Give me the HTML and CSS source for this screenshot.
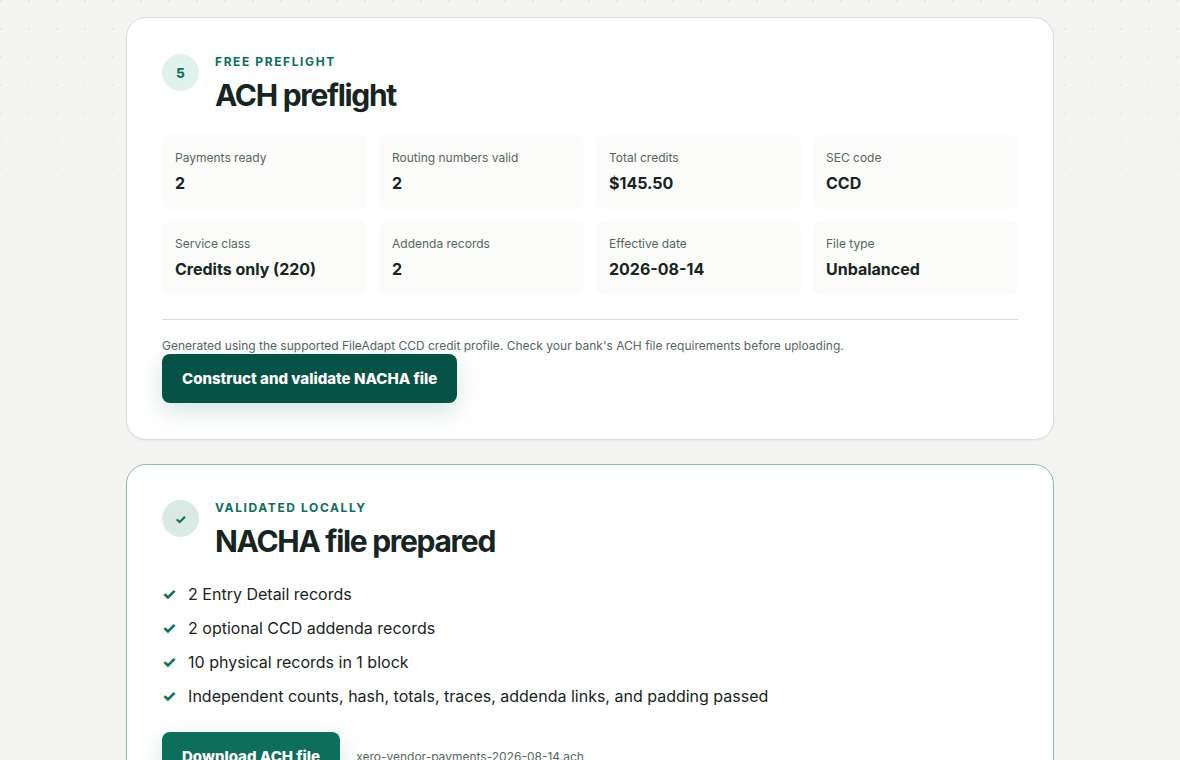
FILE: index.html
```html
<!DOCTYPE html>
<html lang="en">
<head>
<meta charset="utf-8">
<meta name="viewport" content="width=device-width, initial-scale=1">
<title>ACH preflight</title>
<link rel="stylesheet" href="styles.css">
</head>
<body>
<main class="page">
  <section class="card">
    <header class="card-head">
      <span class="step">5</span>
      <div class="heading">
        <p class="eyebrow">FREE PREFLIGHT</p>
        <h2 class="title">ACH preflight</h2>
      </div>
    </header>
    <dl class="facts">
      <div class="fact"><dt>Payments ready</dt><dd>2</dd></div>
      <div class="fact"><dt>Routing numbers valid</dt><dd>2</dd></div>
      <div class="fact"><dt>Total credits</dt><dd>$145.50</dd></div>
      <div class="fact"><dt>SEC code</dt><dd>CCD</dd></div>
      <div class="fact"><dt>Service class</dt><dd>Credits only (220)</dd></div>
      <div class="fact"><dt>Addenda records</dt><dd>2</dd></div>
      <div class="fact"><dt>Effective date</dt><dd>2026-08-14</dd></div>
      <div class="fact"><dt>File type</dt><dd>Unbalanced</dd></div>
    </dl>
    <div class="construct">
      <p class="note">Generated using the supported FileAdapt CCD credit profile. Check your bank's ACH file requirements before uploading.</p>
      <button class="button button-dark" type="button">Construct and validate NACHA file</button>
    </div>
  </section>

  <section class="card card-valid">
    <header class="card-head">
      <span class="step step-valid">✓</span>
      <div class="heading">
        <p class="eyebrow">VALIDATED LOCALLY</p>
        <h2 class="title">NACHA file prepared</h2>
      </div>
    </header>
    <ul class="checks">
      <li>2 Entry Detail records</li>
      <li>2 optional CCD addenda records</li>
      <li>10 physical records in 1 block</li>
      <li>Independent counts, hash, totals, traces, addenda links, and padding passed</li>
    </ul>
    <div class="download">
      <button class="button" type="button">Download ACH file</button>
      <span class="filename">xero-vendor-payments-2026-08-14.ach</span>
    </div>
  </section>
</main>
</body>
</html>
```

FILE: styles.css
```css
* {
  box-sizing: border-box;
}

body {
  margin: 0;
  background: #f4f4f2;
  color: #172522;
  font-family: Inter, "Liberation Sans", sans-serif;
  font-size: 16px;
  line-height: 24px;
}

body::before {
  content: "";
  position: absolute;
  inset: 0 0 auto;
  height: 320px;
  z-index: -1;
  background-image: radial-gradient(circle at 1px 1px, rgba(23, 37, 34, 0.06) 1px, transparent 0);
  background-size: 28px 28px;
  mask-image: linear-gradient(#000, transparent);
}

p, h2, dl, dd, ul {
  margin: 0;
}

.page {
  width: min(928px, 100% - 48px);
  margin: 0 auto;
  padding: 17px 0 24px;
  display: grid;
  gap: 24px;
}

.card {
  padding: 36px 35px;
  background: #fff;
  border: 1px solid #d7dfdb;
  border-radius: 20px;
  box-shadow: 0 1px 2px rgba(23, 37, 34, 0.05);
}

.card-valid {
  padding-top: 35px;
  border-color: #8fb9ab;
}

.card-head {
  display: flex;
  align-items: flex-start;
  gap: 16px;
}

.step {
  flex: none;
  display: grid;
  place-items: center;
  width: 37px;
  height: 37px;
  border-radius: 50%;
  background: #dff2eb;
  color: #0d6e5b;
  font-size: 13px;
  font-weight: 800;
}

.step-valid {
  background: #dbe9e3;
}

.eyebrow {
  color: #0d6e5b;
  font-size: 12px;
  line-height: 16px;
  font-weight: 700;
  letter-spacing: 1.6px;
}

.title {
  margin-top: 4px;
  font-size: 30px;
  line-height: 42px;
  font-weight: 700;
  letter-spacing: -1.3px;
}

.facts {
  display: grid;
  grid-template-columns: repeat(4, 1fr);
  gap: 12px;
  margin-top: 19px;
}

.fact {
  padding: 13px 13px 14px;
  border-radius: 8px;
  background: #fbfbf9;
}

.fact dt {
  color: #566762;
  font-size: 12px;
  line-height: 20px;
}

.fact dd {
  margin-top: 3px;
  font-weight: 700;
}

.construct {
  margin-top: 24px;
  padding-top: 17px;
  border-top: 1px solid #d9dcda;
}

.note,
.filename {
  color: #566762;
  font-size: 12px;
  line-height: 17px;
}

.button {
  min-height: 49px;
  padding: 0 20px;
  border: 0;
  border-radius: 8px;
  background: #0d6e5b;
  color: #fff;
  font: inherit;
  font-size: 15px;
  font-weight: 800;
  box-shadow: 0 8px 24px rgba(13, 110, 91, 0.18);
}

.button-dark {
  background: #075246;
}

.checks {
  display: grid;
  gap: 10px;
  margin-top: 20px;
  padding: 0;
  list-style: none;
}

.checks li {
  display: flex;
  gap: 12px;
}

.checks li::before {
  content: "✓";
  color: #0d6e5b;
  font-weight: 800;
}

.download {
  display: flex;
  align-items: center;
  gap: 16px;
  margin-top: 24px;
}
```
